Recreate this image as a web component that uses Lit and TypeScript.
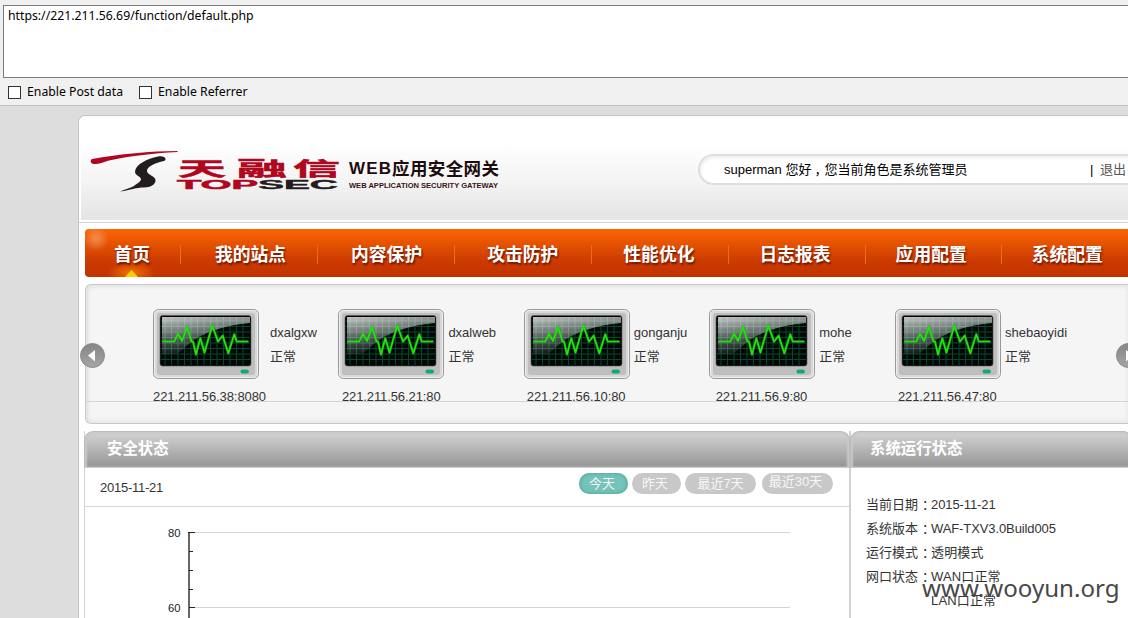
import { LitElement, html, svg, css } from "lit";
import { customElement, property } from "lit/decorators.js";

interface Server {
  name: string;
  address: string;
  gap: number;
  indent: number;
}

@customElement("server-monitor")
class ServerMonitor extends LitElement {
  static styles = css`
    :host { display: block; width: 106px; height: 70px; flex: none; }
    svg { display: block; }
  `;

  render() {
    const columns = [12, 18.5, 25, 31.5, 38, 44.5, 51, 57.5, 64, 70.5, 77, 83.5, 90];
    const rows = [12, 17.5, 23, 28.5, 34, 39.5, 45, 50.5];
    const wave =
      "M9.3 32.500H21.3L25 24.7L29 32L34 18L38.500 32.500H40L43 45.500L47.3 29.3L51.500 43.500L59.3 16.500L65 32.500L69.7 26.7L75.3 44.3L81.3 25.3L83.7 32.500H95.500";
    return html`
      <svg width="106" height="70" viewBox="0 0 106 70">
        <defs>
          <linearGradient id="gloss" x1="0" y1="0" x2="0.25" y2="1">
            <stop offset="0" stop-color="#fff" stop-opacity="0.75" />
            <stop offset="0.55" stop-color="#fff" stop-opacity="0.35" />
            <stop offset="1" stop-color="#fff" stop-opacity="0.05" />
          </linearGradient>
        </defs>
        <rect x="0.5" y="0.5" width="105" height="69" rx="5" fill="#eee" stroke="#989898" />
        <rect x="2" y="2" width="102" height="66" rx="4" fill="#d8d8d8" />
        <rect x="4" y="4" width="98" height="62" rx="3" fill="#bebebe" />
        <rect x="7" y="6.5" width="91" height="50.5" rx="2.500" fill="#020604" stroke="#555" stroke-width="0.6" />
        <g stroke="#054a30" stroke-width="1">
          ${columns.map((x) => svg`<line x1=${x} x2=${x} y1="8" y2="56" />`)}
          ${rows.map((y) => svg`<line x1="8" x2="97" y1=${y} y2=${y} />`)}
        </g>
        <path d="M9 8H97V14C73 16 55 22 41 31C32 37 28 45 20 45H9Z" fill="url(#gloss)" />
        <path d=${wave} fill="none" stroke="#13a012" stroke-width="3" stroke-opacity="0.45" stroke-linejoin="round" />
        <path d=${wave} fill="none" stroke="#24e30c" stroke-width="1.7" stroke-linejoin="round" />
        <rect x="87.5" y="60.5" width="8.4" height="4" rx="2" fill="#0cab72" />
      </svg>
    `;
  }
}

@customElement("brand-logo")
class BrandLogo extends LitElement {
  static styles = css`
    :host { display: block; width: 412px; height: 48px; }
    svg { display: block; }
    .cjk { font-family: "Noto Sans CJK SC", sans-serif; font-weight: 700; }
    .latin { font-family: "Liberation Sans", sans-serif; font-weight: 700; }
    .red { fill: #b0071f; }
    .heavy { stroke: #b0071f; stroke-width: 0.5px; }
    .dark { fill: #221c1c; }
    .bold { stroke: #221c1c; stroke-width: 0.4px; }
    .title { fill: #1d0c0d; }
    .small { fill: #3a1416; }
  `;

  render() {
    return html`
      <svg width="412" height="48" viewBox="0 0 412 48">
        <path class="red" d="M3 9C1 10 1 13.500 5 14C9 14.500 14 12.500 20 10.500C40 6 62 3.500 89 2L88 1C62 1 30 4 3 9Z" />
        <path class="dark" d="M69 6.500C58 9 47 14 46 21.500C46 26 52 26 52 29.500C51.500 32 47 34 45 36C41 38.500 36 39 31 41.500C42 40 47 37.500 55 37.500C62 37.500 67 34 66.500 30C66 25.500 57.500 25 58 20.500C58.500 16.500 66 13 75 11C78.500 9.500 76 5 69 6.500Z" />
        <g class="cjk red heavy" font-size="19.500">
          <text x="89" y="25.500" textLength="48" lengthAdjust="spacingAndGlyphs">天</text>
          <text x="148" y="25.500" textLength="50" lengthAdjust="spacingAndGlyphs">融</text>
          <text x="204" y="25.500" textLength="47" lengthAdjust="spacingAndGlyphs">信</text>
        </g>
        <g class="latin" font-size="12">
          <text class="red heavy" x="88" y="38.500" textLength="81" lengthAdjust="spacingAndGlyphs">TOP</text>
          <text class="dark bold" x="169" y="38.500" textLength="80" lengthAdjust="spacingAndGlyphs">SEC</text>
        </g>
        <text class="latin title" x="260" y="24" font-size="17" textLength="42">WEB</text>
        <text class="cjk title" x="303" y="24.500" font-size="17.500" textLength="107">应用安全网关</text>
        <text class="latin small" x="260" y="38" font-size="7.600" textLength="149" lengthAdjust="spacingAndGlyphs">WEB APPLICATION SECURITY GATEWAY</text>
      </svg>
    `;
  }
}

@customElement("round-arrow")
class RoundArrow extends LitElement {
  @property() direction = "left";

  static styles = css`
    :host { display: block; width: 25px; height: 25px; }
    svg { display: block; }
  `;

  render() {
    return html`
      <svg width="25" height="25" viewBox="0 0 25 25">
        <defs>
          <linearGradient id="disc" x1="0" y1="0" x2="0" y2="1">
            <stop offset="0" stop-color="#858585" />
            <stop offset="1" stop-color="#a6a6a6" />
          </linearGradient>
        </defs>
        <circle cx="12.500" cy="12.500" r="12" fill="url(#disc)" stroke="#8b8b8b" />
        <path d=${this.direction === "left" ? "M8 12.5L15 7V18.500Z" : "M17 12.5L10 7V18.500Z"} fill="#fff" />
      </svg>
    `;
  }
}

@customElement("status-chart")
class StatusChart extends LitElement {
  static styles = css`
    :host { display: block; }
    svg { display: block; }
    text { font-family: "Liberation Sans", sans-serif; font-size: 10.500px; fill: #222; }
  `;

  render() {
    return html`
      <svg width="764" height="111" viewBox="0 0 764 111">
        <path d="M104 25.500H705M104 100.500H705" stroke="#d4d4d4" />
        <path d="M104 25V111" stroke="#666" stroke-width="2" />
        <path d="M103 25.500H110M104 44.500H108M104 63.500H108M104 82.500H108M104 100.500H110" stroke="#222" />
        <text x="83" y="29.500" textLength="12.500" lengthAdjust="spacingAndGlyphs">80</text>
        <text x="83" y="104.500" textLength="12.500" lengthAdjust="spacingAndGlyphs">60</text>
      </svg>
    `;
  }
}

@customElement("app-root")
class AppRoot extends LitElement {
  private nav = ["首页", "我的站点", "内容保护", "攻击防护", "性能优化", "日志报表", "应用配置", "系统配置"];

  private servers: Server[] = [
    { name: "dxalgxw", address: "221.211.56.38:8080", gap: 11, indent: 0 },
    { name: "dxalweb", address: "221.211.56.21:80", gap: 4, indent: 3.5 },
    { name: "gonganju", address: "221.211.56.10:80", gap: 4, indent: 3 },
    { name: "mohe", address: "221.211.56.9:80", gap: 4, indent: 6.5 },
    { name: "shebaoyidi", address: "221.211.56.47:80", gap: 4.4, indent: 3.4 },
  ];

  private status = [
    ["当前日期", "2015-11-21"],
    ["系统版本", "WAF-TXV3.0Build005"],
    ["运行模式", "透明模式"],
    ["网口状态", "WAN口正常"],
    ["", "LAN口正常"],
  ];

  static styles = css`
    :host {
      display: block; position: relative; width: 1128px; height: 618px; overflow: hidden;
      background: #ddd; color: #333; white-space: nowrap;
      font: 13px/24px "Liberation Sans", "Noto Sans CJK SC", sans-serif;
    }
    * { box-sizing: border-box; }
    .toolbar {
      height: 106px; padding: 5px 0 0 3px; background: #f0f0f0; border-bottom: 1px solid #c2c2c2;
      font-family: "Noto Sans", sans-serif; font-size: 12.250px; color: #000;
    }
    .address {
      height: 73px; border: 1px solid #7a7a7a; border-right: 0; background: #fff;
      padding: 1px 4px; line-height: 17px;
    }
    .options { display: flex; padding: 3px 0 0 5px; line-height: 22px; }
    .option { display: flex; align-items: center; gap: 6px; width: 131px; }
    .box { width: 13px; height: 13px; border: 1px solid #333; background: #fff; }
    .page {
      margin: 9px 0 0 78px; height: 503px; background: #fff; overflow: hidden;
      border: 1px solid #c4c4c4; border-width: 1px 0 0 1px; border-top-left-radius: 7px;
    }
    .head { height: 107px; padding: 1px 0 2px 2px; border-bottom: 1px solid #d2d2d2; }
    .banner {
      height: 103px; display: flex; justify-content: space-between; align-items: flex-start;
      background: linear-gradient(#fff 25%, #f4f4f4 62%, #e5e5e5 96%, #e8e8e8); padding: 33px 0 0 8px;
    }
    .welcome {
      display: flex; justify-content: space-between; width: 430px; height: 31px; margin-top: 4px;
      border: 2px solid #dedede; border-right: 0; border-radius: 16px 0 0 16px; background: #fff;
      padding: 0 2px 0 24px; line-height: 28px; color: #000;
      box-shadow: inset 1px 2px 3px #eee;
    }
    .exit { color: #555; margin-left: 3px; }
    .comma { margin: 0 -3px 0 3px; }
    .colon { margin: 0 -4px 0 4px; }
    .nav {
      position: relative; display: flex; height: 48px; margin: 6px 0 0 6px;
      border-radius: 4px 0 0 4px;
      background:
        radial-gradient(circle at 11px 10px, #ffffff50, #ffffff00 13px),
        radial-gradient(ellipse 24px 11px at 46px 44px, #ff8a00c0, #ff8a0000),
        linear-gradient(#f96605, #e65301 30%, #cc3b00 65%, #c23200);
    }
    .tab {
      display: flex; align-items: center; justify-content: center; flex: none; width: 136.850px;
      padding-bottom: 1px; color: #fff; font: 700 17.800px/46px "Noto Sans CJK SC", sans-serif;
      text-shadow: 1px 2px 2px #6d1500;
    }
    .tab:first-child { width: 95.300px; }
    .divider { width: 1px; height: 19px; margin: 16px -1px 0 0; flex: none; background: #ee6c12; }
    .marker {
      position: absolute; left: 40px; top: 41px; width: 13px; height: 7px; background: #f9cf0a;
      clip-path: polygon(50% 0, 100% 100%, 0 100%);
    }
    .carousel {
      position: relative; height: 140px; margin: 7px 0 0 6px; padding: 24px 0 0 67px;
      border: 1px solid #c9c9c9; border-right: 0; border-radius: 6px 0 0 6px;
      background: #f5f5f5; box-shadow: inset 2px 2px 4px #e2e2e2, inset 0 -2px 4px #e6e6e6;
    }
    .strip { display: flex; height: 93px; margin-left: -67px; padding-left: 67px; overflow: hidden; border-bottom: 1px solid #d4d4d4; }
    .server { width: 185.400px; flex: none; }
    .summary { display: flex; }
    .details { padding-top: 12px; height: 70px; }
    .ip { line-height: 36px; letter-spacing: -0.100px; }
    .prev { position: absolute; left: -6px; top: 58px; }
    .next { position: absolute; left: 1030px; top: 58px; }
    .columns { display: flex; margin: 7px 0 0 5px; height: 190px; }
    .left { width: 766px; flex: none; border: 1px solid #d2d2d2; border-width: 0 1px; }
    .right { flex: 1; border-left: 1px solid #d2d2d2; }
    .title {
      height: 37px; margin: 0 -1px; padding-left: 22px; color: #fff; font-size: 15.400px; font-weight: 700;
      line-height: 34px; border: 1px solid #bbb; border-bottom-color: #ccc; border-radius: 9px 9px 0 0;
      background: linear-gradient(#d3d3d3, #b8b8b8 45%, #959595); box-shadow: inset 2px 1px 2px #c8c8c8, inset -2px 0 2px #c8c8c8;
    }
    .right .title { margin-right: -4px; padding-left: 19px; }
    .filters { display: flex; height: 39px; padding: 5px 16px 0 15px; border-bottom: 1px solid #d6d6d6; }
    .date { flex: 1; line-height: 30px; letter-spacing: -0.250px; }
    .pill {
      height: 21px; width: 49px; margin-right: 4px; padding-right: 3px; border-radius: 11px;
      background: #c8c8c8; color: #f7f7f7; text-align: center; line-height: 21px;
    }
    .pill.active { background: #75c3bb; box-shadow: inset 0 0 4px #4d9d96; }
    .pill.wide { width: 71px; margin-right: 6px; padding-right: 0; }
    .pill.last { margin-right: 0; line-height: 17px; padding-right: 4px; }
    .status { padding: 25px 0 0 15px; }
    .row { display: flex; height: 24px; }
    .label { width: 65px; }
    .value { letter-spacing: -0.100px; }
    .value.cjk { letter-spacing: 0.150px; }
    .watermark {
      position: absolute; left: 922px; top: 570px; color: #484848;
      font: 24.100px/36px "Noto Sans", sans-serif;
    }
  `;

  render() {
    return html`
      <div class="toolbar">
        <div class="address">https://221.211.56.69/function/default.php</div>
        <div class="options">
          <label class="option"><span class="box"></span>Enable Post data</label>
          <label class="option"><span class="box"></span>Enable Referrer</label>
        </div>
      </div>
      <main class="page">
        <header class="head">
          <div class="banner">
            <brand-logo></brand-logo>
            <div class="welcome">
              <span>superman 您好<span class="comma">，</span>您当前角色是系统管理员</span>
              <span>| <span class="exit">退出</span></span>
            </div>
          </div>
        </header>
        <nav class="nav">
          ${this.nav.map(
            (label, i) => html`
              ${i ? html`<span class="divider"></span>` : ""}
              <a class="tab" style="padding-right:${i ? (i - 1) * 1.4 : 1}px;padding-left:${i ? 3.5 : 0}px">${label}</a>
            `
          )}
          <span class="marker"></span>
        </nav>
        <section class="carousel">
          <div class="strip">
            ${this.servers.map(
              (s) => html`
                <div class="server">
                  <div class="summary">
                    <server-monitor></server-monitor>
                    <div class="details" style="padding-left:${s.gap}px">
                      <div>${s.name}</div>
                      <div>正常</div>
                    </div>
                  </div>
                  <div class="ip" style="padding-left:${s.indent}px">${s.address}</div>
                </div>
              `
            )}
          </div>
          <round-arrow class="prev"></round-arrow>
          <round-arrow class="next" direction="right"></round-arrow>
        </section>
        <div class="columns">
          <section class="left">
            <div class="title">安全状态</div>
            <div class="filters">
              <span class="date">2015-11-21</span>
              <span class="pill active">今天</span>
              <span class="pill">昨天</span>
              <span class="pill wide">最近7天</span>
              <span class="pill wide last">最近30天</span>
            </div>
            <status-chart></status-chart>
          </section>
          <section class="right">
            <div class="title">系统运行状态</div>
            <div class="status">
              ${this.status.map(
                ([label, value], i) => html`
                  <div class="row">
                    <span class="label">${label}${label ? html`<span class="colon">：</span>` : ""}</span>
                    <span class="value ${i > 1 ? "cjk" : ""}">${value}</span>
                  </div>
                `
              )}
            </div>
          </section>
        </div>
      </main>
      <div class="watermark">www.wooyun.org</div>
    `;
  }
}
